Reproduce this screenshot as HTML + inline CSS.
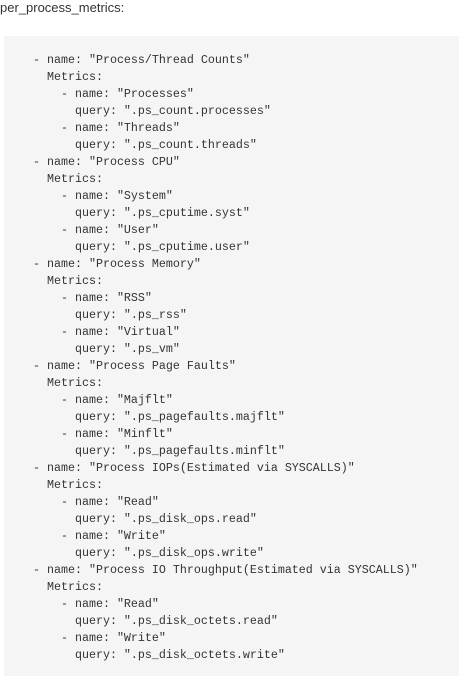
<!DOCTYPE html>
<html><head><style>
html,body{margin:0;padding:0;background:#fff;width:459px;height:670px;overflow:hidden}
.h{position:absolute;left:0;top:0;font:13px "Liberation Sans",sans-serif;color:#333;line-height:16px}
.b{position:absolute;left:4px;top:36px;width:455px;height:640px;background:#f5f5f5}
pre{position:absolute;left:33px;top:52px;margin:0;font:11.67px/17px "Liberation Mono",monospace;color:#333}
</style></head><body>
<div class="h">per_process_metrics:</div>
<div class="b"></div>
<pre>- name: "Process/Thread Counts"
  Metrics:
    - name: "Processes"
      query: ".ps_count.processes"
    - name: "Threads"
      query: ".ps_count.threads"
- name: "Process CPU"
  Metrics:
    - name: "System"
      query: ".ps_cputime.syst"
    - name: "User"
      query: ".ps_cputime.user"
- name: "Process Memory"
  Metrics:
    - name: "RSS"
      query: ".ps_rss"
    - name: "Virtual"
      query: ".ps_vm"
- name: "Process Page Faults"
  Metrics:
    - name: "Majflt"
      query: ".ps_pagefaults.majflt"
    - name: "Minflt"
      query: ".ps_pagefaults.minflt"
- name: "Process IOPs(Estimated via SYSCALLS)"
  Metrics:
    - name: "Read"
      query: ".ps_disk_ops.read"
    - name: "Write"
      query: ".ps_disk_ops.write"
- name: "Process IO Throughput(Estimated via SYSCALLS)"
  Metrics:
    - name: "Read"
      query: ".ps_disk_octets.read"
    - name: "Write"
      query: ".ps_disk_octets.write"</pre>
</body></html>
